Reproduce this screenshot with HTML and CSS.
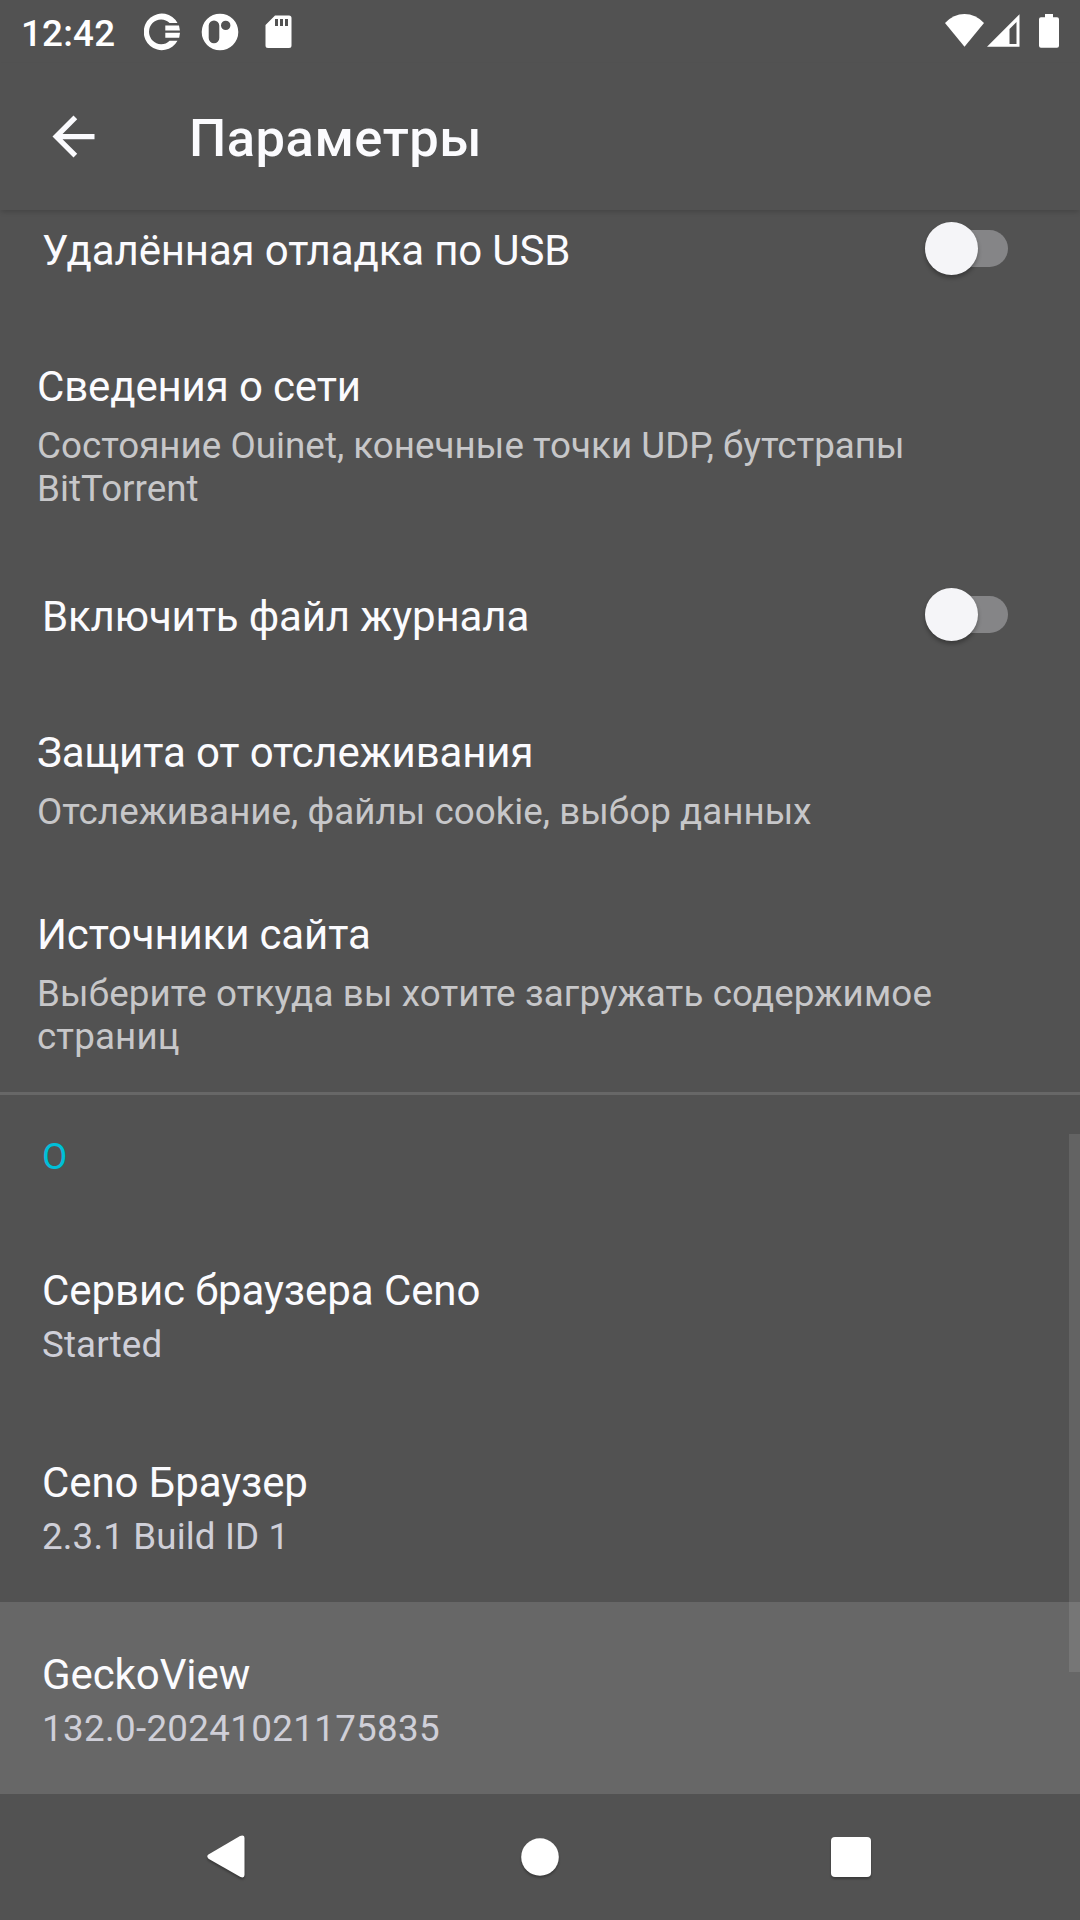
FILE: index.html
```html
<!DOCTYPE html>
<html lang="ru">
<head>
<meta charset="utf-8">
<title>Параметры</title>
<link rel="stylesheet" href="styles.css">
</head>
<body>
<div class="screen">
  <header class="status">
    <span class="clock">12:42</span>
    <svg class="ic-ceno" width="36" height="38" viewBox="0 0 36 38"><path d="M33.500 10A18 18.300 0 1 0 33.500 27.700H25.600A12.100 12.400 0 1 1 25.600 10Z" fill="#fff"/><path d="M21.300 12.600H35L35.900 17.500H21.300ZM21.300 19.700H36L35.200 24.700H21.300Z" fill="#fff"/></svg>
    <svg class="ic-p" width="38" height="38" viewBox="0 0 38 38"><path fill="#fff" fill-rule="evenodd" d="M19 .7a18.300 18.300 0 1 0 0 36.600a18.300 18.300 0 1 0 0-36.600ZM13 7.500a5.300 5.300 0 0 1 5.300 5.300V25a5.300 5.300 0 0 1-10.600 0V12.800A5.300 5.300 0 0 1 13 7.500ZM24.700 7.700a4.700 4.700 0 1 1 0 9.400a4.700 4.700 0 1 1 0-9.400Z"/></svg>
    <svg class="ic-sd" width="27" height="34" viewBox="0 0 27 34"><path fill="#fff" fill-rule="evenodd" d="M10 .5H24Q26.500.5 26.500 3V30.500Q26.500 33 24 33H3Q.5 33 .5 30.500V10ZM10 4V11H13V4ZM15 4V11H18V4ZM20 4V11H23V4Z"/></svg>
    <span class="spacer"></span>
    <svg class="ic-wifi" width="39" height="33" viewBox="0 0 39 33"><path fill="#fff" d="M0 8.900Q8.500 0 19.500 0T39 8.900L19.500 32.800Z"/></svg>
    <svg class="ic-signal" width="33" height="33" viewBox="0 0 33 33"><path fill="#fff" fill-rule="evenodd" d="M32.500.2V32.800H0ZM29.500 8L22.500 15V30H29.500Z"/></svg>
    <svg class="ic-batt" width="20" height="34" viewBox="0 0 20 34"><path fill="#fff" d="M6 0H14V3.300H18Q20 3.300 20 5.300V31.800Q20 33.800 18 33.800H2Q0 33.800 0 31.800V5.300Q0 3.300 2 3.300H6Z"/></svg>
  </header>
  <div class="appbar">
    <svg class="back" width="63" height="63" viewBox="0 0 24 24"><path fill="#fbfbfe" d="M20 11H7.830l5.590-5.590L12 4l-8 8 8 8 1.410-1.410L7.830 13H20v-2z"/></svg>
    <h1 class="title">Параметры</h1>
  </div>
  <main class="list">
    <section class="row toggle first">
      <span class="name">Удалённая отладка по USB</span>
      <span class="switch"><span class="thumb"></span></span>
    </section>
    <section class="row link">
      <div class="name">Сведения о сети</div>
      <div class="summary">Состояние Ouinet, конечные точки UDP, бутстрапы<br>BitTorrent</div>
    </section>
    <section class="row toggle">
      <span class="name">Включить файл журнала</span>
      <span class="switch"><span class="thumb"></span></span>
    </section>
    <section class="row link">
      <div class="name">Защита от отслеживания</div>
      <div class="summary">Отслеживание, файлы cookie, выбор данных</div>
    </section>
    <section class="row link last">
      <div class="name">Источники сайта</div>
      <div class="summary spaced">Выберите откуда вы хотите загружать содержимое<br>страниц</div>
    </section>
    <h2 class="category">О</h2>
    <section class="row info">
      <div class="name">Сервис браузера Ceno</div>
      <div class="summary spaced">Started</div>
    </section>
    <section class="row info">
      <div class="name">Ceno Браузер</div>
      <div class="summary spaced">2.3.1 Build ID 1</div>
    </section>
    <section class="row info pressed">
      <div class="name">GeckoView</div>
      <div class="summary digits">132.0-20241021175835</div>
    </section>
    <div class="scrollbar"></div>
  </main>
  <nav class="navbar">
    <svg width="38" height="44" viewBox="0 0 38 44"><path fill="#fff" d="M1 19.800L33 1Q37.500-.5 37.500 3V40Q37.500 43.500 33.500 42L1.500 23.700Q-.5 21.800 1 19.800Z"/></svg>
    <svg class="home" width="38" height="38" viewBox="0 0 38 38"><circle cx="19" cy="19" r="18.800" fill="#fff"/></svg>
    <svg width="40" height="40" viewBox="0 0 40 40"><rect width="40" height="40" rx="4" fill="#fff"/></svg>
  </nav>
</div>
</body>
</html>
```
FILE: styles.css
```css
* { box-sizing: border-box; }
body {
  margin: 0;
  background: #525252;
  color: #fbfbfe;
  font-family: Roboto, "Noto Sans", sans-serif;
}
svg { display: block; flex: none; }
.screen {
  width: 1080px;
  height: 1920px;
  display: flex;
  flex-direction: column;
  overflow: hidden;
}

/* system status bar */
.status {
  height: 63px;
  flex: none;
  display: flex;
  align-items: flex-start;
  padding: 13px 21px 0 21px;
  color: #fff;
}
.clock {
  width: 123px;
  font-size: 36.75px;
  font-weight: 500;
  line-height: 43px;
  letter-spacing: .2px;
  margin-top: -1px;
}
.ic-p { margin-left: 21px; }
.ic-sd { margin: 2px 0 0 26px; }
.spacer { flex: 1; }
.ic-wifi { margin-top: 1px; }
.ic-signal { margin: 1px 19px 0 3px; }
.ic-batt { margin-top: 1px; }

/* app bar */
.appbar {
  height: 147px;
  flex: none;
  display: flex;
  align-items: center;
  padding-left: 42px;
  position: relative;
  z-index: 1;
  background: #525252;
  box-shadow: 0 3px 5px -1px rgba(0, 0, 0, .16);
}
.title {
  margin: 3px 0 0 84px;
  font-size: 52.5px;
  font-weight: 500;
  line-height: 62px;
  letter-spacing: .5px;
}

/* settings list */
.list {
  height: 1584px;
  flex: none;
  position: relative;
}
.name { font-size: 42px; line-height: 49px; letter-spacing: -.14px; }
.summary { font-size: 36.75px; line-height: 43px; letter-spacing: .03px; }
.spaced { letter-spacing: .13px; }
.digits { letter-spacing: .32px; }
.toggle {
  height: 140px;
  display: flex;
  align-items: center;
  justify-content: space-between;
  padding: 4px 72px 0 42px;
}
.toggle .name { margin-top: 2px; }
.toggle.first { margin-top: -33px; }
.link { padding: 45px 37px 33px; }
.link.last { padding: 44px 37px 34px; }
.link .summary { margin-top: 13px; color: #c7c7c9; }
.info { height: 192px; padding: 48px 42px 0; }
.info .name { letter-spacing: -.08px; }
.info .summary { margin-top: 8px; color: #cfcfd8; }
.pressed { background: #676767; }
.category {
  margin: 0;
  height: 126px;
  padding: 40px 42px 0;
  border-top: 3px solid #676767;
  color: #00bfd8;
  font-size: 36.75px;
  font-weight: 400;
  line-height: 43px;
}
.switch {
  width: 83px;
  height: 37px;
  margin-top: -1px;
  display: flex;
  align-items: center;
  border-radius: 19px;
  background: #858587;
}
.thumb {
  width: 53px;
  height: 53px;
  flex: none;
  border-radius: 50%;
  background: #f5f5f8;
  box-shadow: 0 3px 4px rgba(0, 0, 0, .3);
}
.scrollbar {
  position: absolute;
  top: 924px;
  right: 0;
  width: 11px;
  height: 538px;
  background: rgba(255, 255, 255, .1);
}

/* system navigation */
.navbar {
  height: 126px;
  flex: none;
  display: flex;
  align-items: center;
  justify-content: space-between;
  padding: 0 209px 0 207px;
}
.navbar svg { filter: drop-shadow(0 2px 1px rgba(0, 0, 0, .3)); }
.home { margin-left: 4px; }
```
